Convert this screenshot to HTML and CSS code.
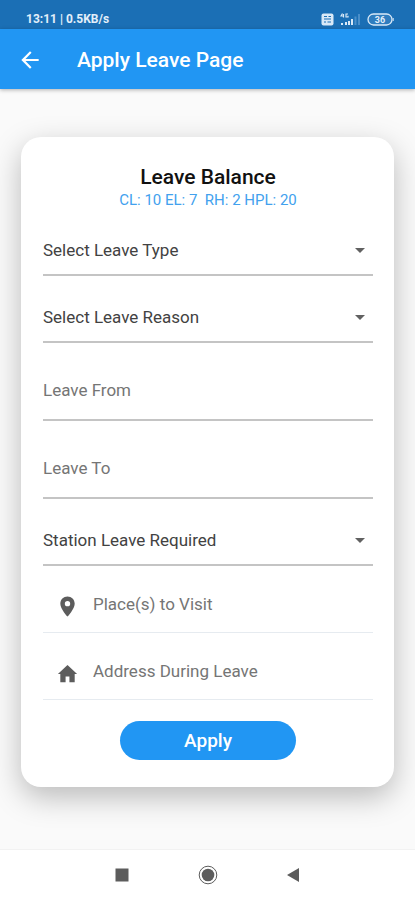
FILE: index.html
```html
<!DOCTYPE html>
<html lang="en">
<head>
<meta charset="utf-8">
<meta name="viewport" content="width=device-width, initial-scale=1">
<title>Apply Leave Page</title>
<link rel="stylesheet" href="styles.css">
</head>
<body>
<div class="status-bar">
  <span>13:11 | 0.5KB/s</span>
  <div class="status-icons">
    <svg width="13" height="13" viewBox="0 0 13 13" aria-hidden="true">
      <rect x="0.5" y="0.5" width="12" height="12" rx="2" fill="#d9e9f7"/>
      <path d="M3 3.5h3M7.500 3.500h2.500M3 6h7M3 9h2M6.500 9h3.500" stroke="#1b6fb5" stroke-width="1.200" fill="none"/>
    </svg>
    <svg width="21" height="13" viewBox="0 0 21 13" aria-hidden="true">
      <path d="M2.500 0.500L1 3h3M3.500 1v3.500M8 1H6v3h2V2.800" stroke="#d9e9f7" stroke-width="1.200" fill="none"/>
      <path d="M1 10h2v2H1zM5 9h2v3H5zM8 8h2v4H8zM11 6h2v6h-2z" fill="#d9e9f7"/>
      <path d="M14.500 3.500h2V12h-2zM18 1h2v11h-2z" fill="#4a8fca"/>
    </svg>
    <svg width="27" height="13" viewBox="0 0 27 13" aria-hidden="true">
      <rect x="1" y="1" width="24" height="11" rx="5.500" fill="#2f7dbf" stroke="#d9e9f7" stroke-width="1.300"/>
      <path d="M26.200 5v3" stroke="#d9e9f7" stroke-width="1"/>
      <text class="battery-level" x="13" y="10" text-anchor="middle">36</text>
    </svg>
  </div>
</div>
<header class="app-bar">
  <button class="back" type="button" aria-label="Back">
    <svg width="26" height="26" viewBox="0 0 24 24" aria-hidden="true"><path d="M20 11H7.830l5.590-5.590L12 4l-8 8 8 8 1.410-1.410L7.830 13H20v-2z" fill="currentColor"/></svg>
  </button>
  <h1>Apply Leave Page</h1>
</header>
<main>
  <form class="card">
    <h2>Leave Balance</h2>
    <p class="balance">CL: 10 EL: 7 &nbsp;RH: 2 HPL: 20</p>
    <div class="select-field">
      <select aria-label="Leave type"><option>Select Leave Type</option></select>
      <svg class="caret" viewBox="0 0 10 5" aria-hidden="true"><path d="M0 0h10L5 5z"/></svg>
    </div>
    <div class="select-field">
      <select aria-label="Leave reason"><option>Select Leave Reason</option></select>
      <svg class="caret" viewBox="0 0 10 5" aria-hidden="true"><path d="M0 0h10L5 5z"/></svg>
    </div>
    <input class="date-field" type="text" aria-label="Leave From" placeholder="Leave From">
    <input class="date-field" type="text" aria-label="Leave To" placeholder="Leave To">
    <div class="select-field">
      <select aria-label="Station leave"><option>Station Leave Required</option></select>
      <svg class="caret" viewBox="0 0 10 5" aria-hidden="true"><path d="M0 0h10L5 5z"/></svg>
    </div>
    <div class="icon-field">
      <svg viewBox="0 0 24 24" aria-hidden="true"><path d="M12 1.500C7.800 1.500 4.500 4.700 4.500 9c0 5.400 7.500 13.500 7.500 13.500s7.500-8.100 7.500-13.500c0-4.300-3.300-7.500-7.500-7.500zm0 10.300a2.800 2.800 0 1 1 0-5.600 2.800 2.800 0 0 1 0 5.600z"/></svg>
      <input type="text" aria-label="Place(s) to Visit" placeholder="Place(s) to Visit">
    </div>
    <div class="icon-field">
      <svg viewBox="0 0 24 24" aria-hidden="true"><path d="M10 21v-6h4v6h5.500v-8.500H22L12 3 2 12.500h2.500V21z"/></svg>
      <input type="text" aria-label="Address During Leave" placeholder="Address During Leave">
    </div>
    <button class="apply" type="submit">Apply</button>
  </form>
</main>
<nav class="nav-bar" aria-label="System">
  <button type="button" aria-label="Recent apps"><svg viewBox="0 0 20 20" aria-hidden="true"><rect x="3.500" y="3.500" width="13" height="13"/></svg></button>
  <button type="button" aria-label="Home"><svg viewBox="0 0 20 20" aria-hidden="true"><circle cx="10" cy="10" r="6.300"/><circle class="ring" cx="10" cy="10" r="8.800"/></svg></button>
  <button type="button" aria-label="Back"><svg viewBox="0 0 20 20" aria-hidden="true"><path d="M3 10l12-7v14z"/></svg></button>
</nav>
</body>
</html>
```
FILE: styles.css
```css
* {
  box-sizing: border-box;
}

body {
  display: flex;
  flex-direction: column;
  min-height: 100vh;
  margin: 0;
  background: #fafafa;
  color: #424242;
  font-family: Roboto, sans-serif;
  font-size: 17px;
}

h1,
h2,
p {
  margin: 0;
  font-weight: 500;
}

button,
input,
select {
  margin: 0;
  padding: 0;
  border: 0;
  border-radius: 0;
  background: none;
  color: inherit;
  font: inherit;
}

.status-bar {
  display: flex;
  align-items: center;
  justify-content: space-between;
  height: 29px;
  padding: 9px 21px 0 26px;
  background: #1b6fb5;
  color: #e3effa;
  font-size: 12px;
  font-weight: 700;
}

.status-icons {
  display: flex;
  align-items: center;
  gap: 6px;
}

.battery-level {
  fill: #e3effa;
  font-size: 9px;
}

.app-bar {
  position: relative;
  display: flex;
  align-items: center;
  gap: 34px;
  height: 60px;
  padding: 2px 17px 0;
  background: #2196f3;
  box-shadow: 0 1px 4px rgba(0, 0, 0, 0.3);
  color: #fff;
}

.back {
  display: flex;
}

h1 {
  font-size: 21px;
}

main {
  flex: 1;
  padding: 48px 21px 62px;
}

.card {
  display: flex;
  flex-direction: column;
  padding: 28px 21px 27px 22px;
  border-radius: 20px;
  background: #fff;
  box-shadow: 0 10px 30px rgba(0, 0, 0, 0.26);
}

h2 {
  color: #111;
  font-size: 21px;
  line-height: 24px;
  text-align: center;
}

.balance {
  margin-top: 2px;
  color: #42a1ee;
  font-size: 15px;
  font-weight: 400;
  line-height: 18px;
  text-align: center;
}

.select-field {
  display: grid;
  align-items: center;
  height: 50px;
  margin-top: 17px;
  border-bottom: 2px solid #c4c4c4;
}

.select-field select {
  grid-area: 1 / 1;
  width: 100%;
  height: 100%;
  appearance: none;
}

.caret {
  grid-area: 1 / 1;
  justify-self: end;
  width: 10px;
  height: 5px;
  margin-right: 8px;
  fill: #616161;
  pointer-events: none;
}

.date-field {
  height: 64px;
  margin-top: 14px;
  padding-top: 4px;
  border-bottom: 2px solid #c4c4c4;
}

input::placeholder {
  color: #757575;
  opacity: 1;
}

.icon-field {
  display: flex;
  align-items: center;
  gap: 14px;
  height: 56px;
  margin-top: 11px;
  padding-left: 13px;
  border-bottom: 1px solid #e6ebf0;
}

.icon-field svg {
  width: 23px;
  height: 23px;
  margin-top: 4px;
  fill: #5c5c5c;
}

.icon-field input {
  flex: 1;
  min-width: 0;
  height: 100%;
  padding-bottom: 1px;
}

.apply {
  align-self: center;
  width: 176px;
  height: 39px;
  margin-top: 21px;
  border-radius: 20px;
  background: #2196f3;
  color: #fff;
  font-size: 19px;
  font-weight: 500;
}

.nav-bar {
  display: flex;
  align-items: center;
  justify-content: center;
  gap: 66px;
  height: 51px;
  border-top: 1px solid #f2f2f2;
  background: #fff;
}

.nav-bar button {
  display: flex;
}

.nav-bar svg {
  width: 20px;
  height: 20px;
  fill: #5c5c5c;
}

.nav-bar .ring {
  fill: none;
  stroke: #5c5c5c;
  stroke-width: 1;
}
```
